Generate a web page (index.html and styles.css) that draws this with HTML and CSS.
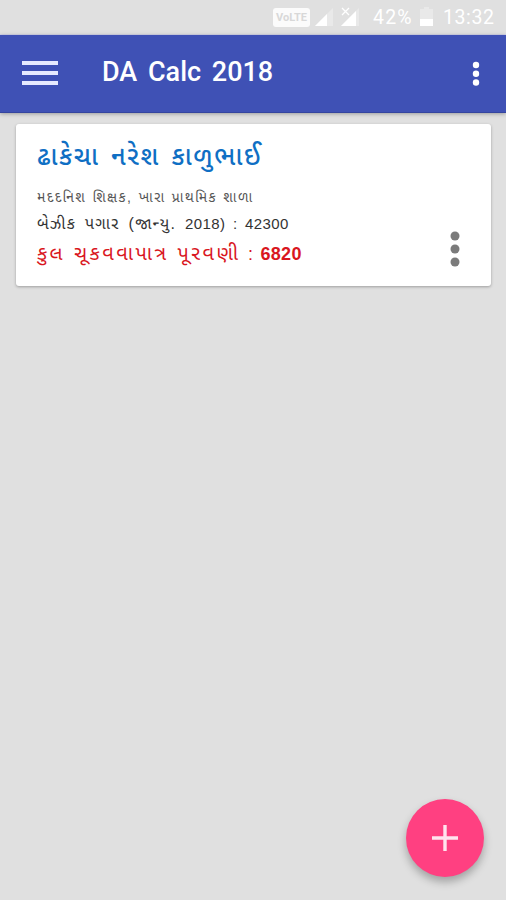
FILE: index.html
```html
<!DOCTYPE html>
<html lang="gu">
<head>
    <meta charset="UTF-8">
    <meta name="viewport" content="width=device-width, initial-scale=1.0">
    <title>DA Calc 2018</title>
    <link rel="stylesheet" href="styles.css">
</head>
<body>
    <!-- Status Bar -->
    <div class="status-bar">
        <span class="volte">VoLTE</span>
        <svg class="signal" width="20" height="20" viewBox="0 0 20 20">
            <path d="M19 1V19H1Z" fill="#e9e9e9"/>
            <path d="M13 7V19H1Z" fill="#fff"/>
        </svg>
        <svg class="signal-off" width="20" height="20" viewBox="0 0 20 20">
            <path d="M19 1V19H1Z" fill="#e9e9e9"/>
            <path d="M16 4V19H1Z" fill="#fff"/>
            <path d="M2 1L9 8M9 1L2 8" stroke="#fff" stroke-width="1.3"/>
        </svg>
        <span class="battery-text">42%</span>
        <svg class="battery" width="13" height="20" viewBox="0 0 13 20">
            <path d="M4 0H9V2H13V12H0V2H4Z" fill="#e9e9e9"/>
            <path d="M0 12H13V19H0Z" fill="#fff"/>
        </svg>
        <span class="clock">13:32</span>
    </div>

    <!-- App Bar -->
    <header class="app-bar">
        <button type="button" class="menu-btn">
            <span></span>
            <span></span>
            <span></span>
        </button>
        <h1>DA Calc 2018</h1>
        <button type="button" class="more-btn">
            <svg width="10" height="26" viewBox="0 0 10 26" fill="#fff">
                <circle cx="5" cy="4" r="3.2"/>
                <circle cx="5" cy="12.8" r="3.2"/>
                <circle cx="5" cy="21.5" r="3.2"/>
            </svg>
        </button>
    </header>

    <!-- Employee Card -->
    <div class="card">
        <div class="card-info">
            <h2 class="name">ઢાકેચા નરેશ કાળુભાઈ</h2>
            <p class="post">મદદનિશ શિક્ષક, ખારા પ્રાથમિક શાળા</p>
            <p class="basic">બેઝીક પગાર (જાન્યુ. <span class="num">2018) : 42300</span></p>
            <p class="total">કુલ ચૂકવવાપાત્ર પૂરવણી<span class="amount"> : <b>6820</b></span></p>
        </div>
        <button type="button" class="card-more">
            <svg width="12" height="38" viewBox="0 0 12 38" fill="#7b7b7b">
                <circle cx="6" cy="6" r="4.5"/>
                <circle cx="6" cy="19" r="4.5"/>
                <circle cx="6" cy="32" r="4.5"/>
            </svg>
        </button>
    </div>

    <button type="button" class="fab">
        <svg width="28" height="28" viewBox="0 0 28 28">
            <path d="M14 1V27M1 14H27" stroke="#ffe4ee" stroke-width="3.4"/>
        </svg>
    </button>
</body>
</html>
```
FILE: styles.css
```css
/* Global Styles */
* {
    box-sizing: border-box;
}

body {
    margin: 0;
    height: 900px;
    overflow: hidden;
    background: #e0e0e0;
    font-family: 'Liberation Sans', 'Noto Sans Gujarati', sans-serif;
}

button {
    display: flex;
    padding: 0;
    border: none;
    background: none;
}

h1, h2, p {
    margin: 0;
    white-space: nowrap;
}

/* Status Bar */
.status-bar {
    display: flex;
    align-items: center;
    height: 35px;
    padding-left: 273px;
    border-bottom: 1px solid #d3d4e8;
    color: #fff;
    font-family: Roboto, sans-serif;
    font-size: 19.5px;
}

.volte {
    width: 37px;
    height: 19px;
    border-radius: 3px;
    background: #fbfbfb;
    color: #d8d8d8;
    font-size: 11px;
    font-weight: bold;
    line-height: 19px;
    text-align: center;
}

.signal {
    margin-left: 4px;
}

.signal-off {
    margin-left: 6px;
}

.battery-text {
    width: 41px;
    margin-left: 13px;
    letter-spacing: 1.2px;
}

.battery {
    margin-left: 6px;
}

.clock {
    margin-left: 10px;
    letter-spacing: 0.6px;
}

/* App Bar */
.app-bar {
    display: flex;
    align-items: center;
    height: 78px;
    padding: 0 25px 0 22px;
    background: #3f51b5;
    border-bottom: 1px solid #35459f;
    box-shadow: 0 1px 4px rgba(0, 0, 0, 0.3);
}

.menu-btn {
    flex-direction: column;
    gap: 6px;
    width: 36px;
    margin-top: -1px;
}

.menu-btn span {
    height: 4px;
    background: #e6eaff;
}

.app-bar h1 {
    flex: 1;
    margin: -4px 0 0 44px;
    color: #fff;
    font-family: Roboto, sans-serif;
    font-size: 27px;
    font-weight: 500;
    word-spacing: 4px;
}

/* Employee Card */
.card {
    display: flex;
    justify-content: space-between;
    height: 162px;
    margin: 11px 15px 0 16px;
    padding: 14px 30px 0 21px;
    border-radius: 3px;
    background: #fff;
    box-shadow: 0 1px 3px rgba(0, 0, 0, 0.3);
}

.name {
    height: 46px;
    color: #0f6fc4;
    font-size: 25.5px;
    line-height: 37px;
    font-weight: 500;
    letter-spacing: 1.6px;
    word-spacing: 3px;
}

.post {
    height: 27px;
    color: #555;
    font-size: 14px;
    line-height: 27px;
    letter-spacing: 1.4px;
    word-spacing: 1px;
}

.basic {
    height: 26px;
    color: #333;
    font-size: 16px;
    line-height: 26px;
    letter-spacing: 1.3px;
    word-spacing: 3px;
}

.num {
    font-size: 15px;
    letter-spacing: 0.4px;
}

.total {
    height: 34px;
    color: #d9161e;
    font-size: 20px;
    line-height: 33px;
    letter-spacing: 2.4px;
    word-spacing: 1px;
}

.amount {
    font-size: 18px;
    letter-spacing: 0.3px;
    word-spacing: 2px;
}

.card-more {
    align-self: flex-start;
    margin-top: 92px;
}

/* Add Button */
.fab {
    position: absolute;
    left: 406px;
    top: 799px;
    width: 78px;
    height: 78px;
    align-items: center;
    justify-content: center;
    border-radius: 50%;
    background: #ff4081;
    box-shadow: 0 5px 8px rgba(0, 0, 0, 0.28);
}
```
